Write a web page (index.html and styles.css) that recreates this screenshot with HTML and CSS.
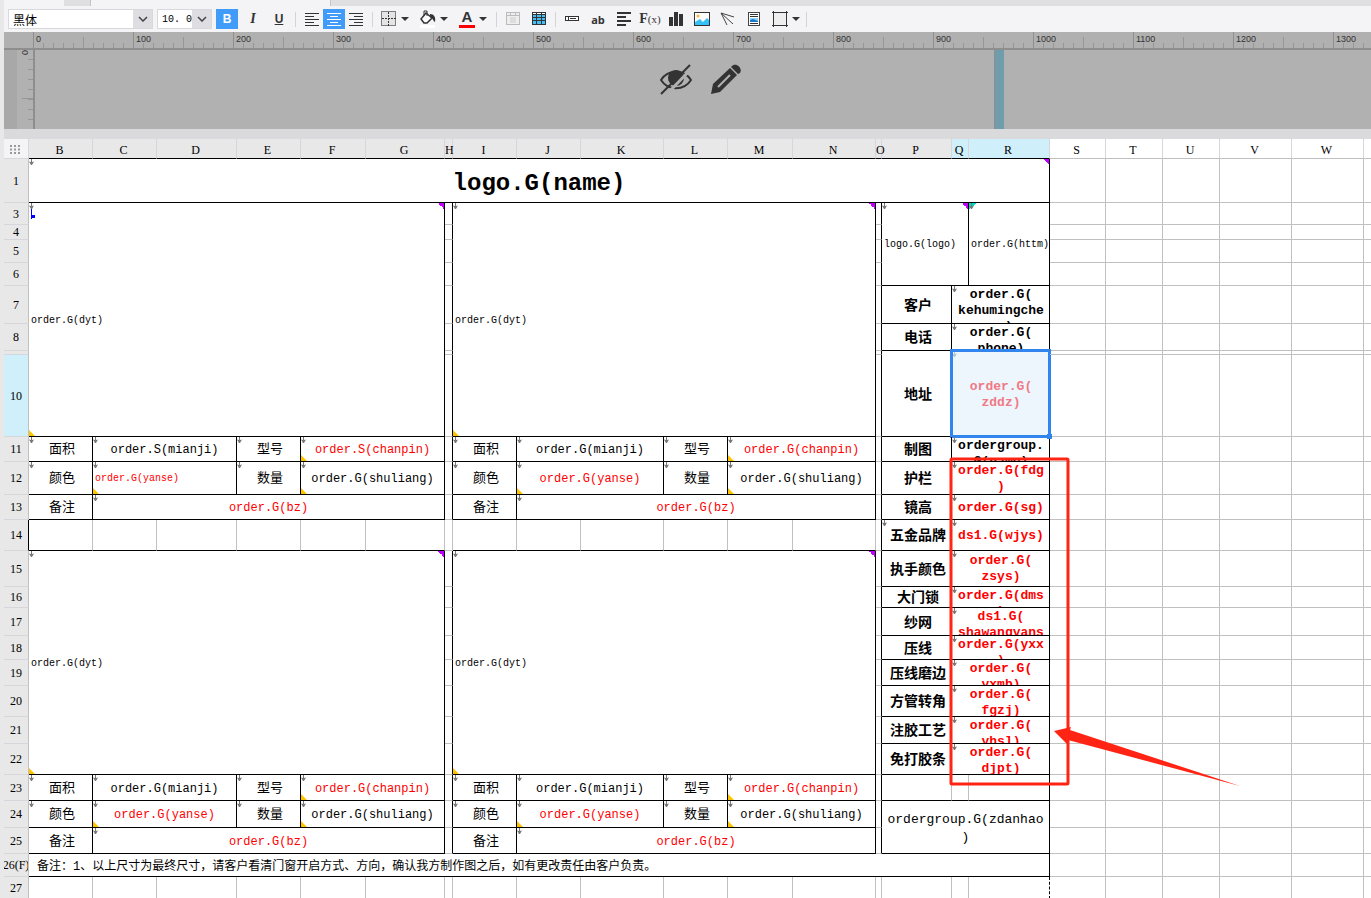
FILE: index.html
```html
<!DOCTYPE html>
<html lang="zh-CN">
<head>
    <meta charset="UTF-8">
    <meta name="viewport" content="width=device-width, initial-scale=1.0">
    <title>logo.G(name)</title>
    <link rel="stylesheet" href="styles.css">
</head>
<body>
    <div class="tabs"><span class="tab"></span><span class="tab-rest"></span></div>

    <div class="toolbar">
        <div class="pick font-name">
            <select aria-label="字体"><option>黑体</option></select>
            <svg width="10" height="6"><path d="M1 1l4 4 4-4" fill="none" stroke="#444" stroke-width="1.500"/></svg>
        </div>
        <div class="pick font-size">
            <select aria-label="字号"><option>10. 0</option></select>
            <svg width="10" height="6"><path d="M1 1l4 4 4-4" fill="none" stroke="#444" stroke-width="1.500"/></svg>
        </div>
        <button class="tool active bold" aria-label="加粗">B</button>
        <button class="tool italic" aria-label="斜体">I</button>
        <button class="tool underline" aria-label="下划线">U</button>
        <span class="sep"></span>
        <div class="group">
            <button class="tool" aria-label="左对齐"><svg width="16" height="14"><path d="M1 1.500h14M1 4.500h9M1 7.500h14M1 10.500h9M1 13.500h14" stroke="#333"/></svg></button>
            <button class="tool active" aria-label="居中"><svg width="16" height="14"><path d="M1 1.500h14M4 4.500h8M1 7.500h14M4 10.500h8M1 13.500h14" stroke="#fff"/></svg></button>
            <button class="tool" aria-label="右对齐"><svg width="16" height="14"><path d="M1 1.500h14M6 4.500h9M1 7.500h14M6 10.500h9M1 13.500h14" stroke="#333"/></svg></button>
        </div>
        <span class="sep"></span>
        <div class="group split">
            <button class="tool" aria-label="边框"><svg width="16" height="16"><rect x=".5" y=".5" width="14" height="14" fill="#e4e4e4" stroke="#111" stroke-dasharray="1 1"/><path d="M7.500 1v14M1 7.500h14" stroke="#333" stroke-dasharray="2 1"/></svg></button>
            <button class="drop" aria-label="边框选项"></button>
        </div>
        <div class="group split">
            <button class="tool" aria-label="填充"><svg width="18" height="18"><path d="M7 3l6 5-5 5H5L2 9z" fill="#fff" stroke="#333" stroke-width="1.500"/><path d="M5 6V1h3v5" fill="none" stroke="#333"/><path d="M11 4c4 0 6 3 5 8-2-1-2-4-5-5z" fill="#333"/><path d="M1 15h15v3H1z" fill="#fff"/></svg></button>
            <button class="drop" aria-label="填充选项"></button>
        </div>
        <div class="group split">
            <button class="tool color" aria-label="文字颜色">A</button>
            <button class="drop" aria-label="颜色选项"></button>
        </div>
        <span class="sep"></span>
        <button class="tool" aria-label="单元格"><svg width="16" height="16"><rect x="1.500" y="1.500" width="13" height="12" fill="#eee" stroke="#bbb"/><path d="M1 4.500h14M5.500 1v3M10.500 1v3" stroke="#bbb"/><rect x="5" y="6" width="6" height="6" fill="#ddd"/></svg></button>
        <button class="tool" aria-label="表格"><svg width="16" height="16"><path d="M1 1h14v13H1z" fill="#333"/><path d="M2 4h3v2H2zM6 4h4v2H6zM11 4h3v2h-3zM2 7h3v2H2zM6 7h4v2H6zM11 7h3v2h-3zM2 10h3v3H2zM6 10h4v3H6zM11 10h3v3h-3z" fill="#45bdf5"/><path d="M2 2h3v1H2zM6 2h4v1H6zM11 2h3v1h-3z" fill="#fff"/></svg></button>
        <span class="sep"></span>
        <button class="tool" aria-label="控件"><svg width="16" height="8"><rect x="1.500" y="1.500" width="13" height="4" fill="#fff" stroke="#333"/><path d="M4.500 2v3M6 3.500h6" stroke="#333"/></svg></button>
        <button class="tool text" aria-label="文本">ab</button>
        <button class="tool" aria-label="段落"><svg width="16" height="16"><path d="M1 2h14M1 6h9M1 10h14M1 14h9" stroke="#333" stroke-width="2"/></svg></button>
        <button class="tool formula" aria-label="公式">F<small>(x)</small></button>
        <button class="tool" aria-label="图表"><svg width="16" height="16"><path d="M1 6h4v9H1zM6 1h4v14H6zM11 3h4v12h-4z" fill="#333"/></svg></button>
        <button class="tool" aria-label="图片"><svg width="16" height="16"><rect x=".5" y="1.500" width="15" height="13" fill="#fff" stroke="#333"/><path d="M1 11l5-3 3 3 4-4 2 2v5H1z" fill="#35c1f7"/><circle cx="4" cy="5" r="1.500" fill="#f8b43a"/></svg></button>
        <button class="tool" aria-label="斜线"><svg width="16" height="16"><path d="M1 2l13 4M1 2l12 11M1 2l6 12" fill="none" stroke="#444"/></svg></button>
        <button class="tool" aria-label="子报表"><svg width="16" height="16"><rect x="2.500" y="1.500" width="11" height="13" fill="#fff" stroke="#444"/><path d="M4 3.500h8M4 5.500h8M4 12.500h8" stroke="#333"/><path d="M4 7h8v4H4z" fill="#8fd0f5"/><path d="M4 11V9l3-1 5 2v1z" fill="#1d78cc"/></svg></button>
        <div class="group split">
            <button class="tool" aria-label="形状"><svg width="18" height="18"><rect x="2.500" y="2.500" width="12" height="12" fill="#eee"/><path d="M2.500 1v16M15.500 1v16M1 2.500h16M1 15.500h16" stroke="#333"/></svg></button>
            <button class="drop" aria-label="形状选项"></button>
        </div>
        <span class="sep"></span>
    </div>

    <div class="ruler">
        <span>0</span><span>100</span><span>200</span><span>300</span><span>400</span><span>500</span><span>600</span><span>700</span><span>800</span><span>900</span><span>1000</span><span>1100</span><span>1200</span><span>1300</span>
    </div>
    <div class="stage">
        <div class="v-ruler">0</div>
        <div class="canvas">
            <svg width="34" height="34" viewBox="0 0 34 34"><path d="M2 17C9 6 25 6 32 17C25 28 9 28 2 17z" fill="none" stroke="#333" stroke-width="2"/><circle cx="17" cy="15" r="8" fill="#333"/><path d="M34 4L5 34" stroke="#b0b0b0" stroke-width="3"/><path d="M31 2L2 31" stroke="#333" stroke-width="2"/></svg>
            <svg width="32" height="32" viewBox="0 0 32 32"><path d="M1 31l2-10L20 5l7 7-17 17z" fill="#333"/><path d="M22 3c4-4 11 2 8 7l-2 1-7-7z" fill="#333"/><path d="M8 24L20 12" stroke="#b0b0b0" stroke-width="2"/></svg>
        </div>
        <div class="guide"></div>
    </div>

    <main class="sheet">
        <table>
            <colgroup>
                <col class="w25"><col class="w64"><col class="w64"><col class="w80"><col class="w64"><col class="w65"><col class="w79"><col class="w8"><col class="w64"><col class="w64"><col class="w83"><col class="w64"><col class="w65"><col class="w83"><col class="w6"><col class="w70"><col class="w17"><col class="w81"><col class="w56"><col class="w57"><col class="w57"><col class="w72"><col class="w72"><col>
            </colgroup>
            <tr class="head">
                <th class="corner"><svg width="11" height="9"><path d="M0 1h11M0 4.500h11M0 8h11" stroke="#999" stroke-width="2" stroke-dasharray="2 2"/></svg></th>
                <th>B</th><th>C</th><th>D</th><th>E</th><th>F</th><th>G</th><th>H</th><th>I</th><th>J</th><th>K</th><th>L</th><th>M</th><th>N</th><th>O</th><th>P</th><th class="on">Q</th><th class="on">R</th>
                <th class="out">S</th><th class="out">T</th><th class="out">U</th><th class="out">V</th><th class="out">W</th><th class="out"></th>
            </tr>
            <tr class="r1">
                <th>1</th><td class="kr kb arrow purple title" colspan="17">logo.G(name)</td>
                <td></td><td></td><td></td><td></td><td></td><td></td>
            </tr>
            <tr class="r3">
                <th>3</th><td class="kr kb arrow purple yellow small start" colspan="6" rowspan="8">order.G(dyt)</td><td class="kr"></td>
                <td class="kr kb arrow purple yellow small" colspan="6" rowspan="8">order.G(dyt)</td><td class="kr"></td>
                <td class="kr kb arrow purple small" colspan="2" rowspan="4">logo.G(logo)</td><td class="kr kb arrow teal small" rowspan="4">order.G(httm)</td>
                <td></td><td></td><td></td><td></td><td></td><td></td>
            </tr>
            <tr class="r4"><th>4</th><td class="kr"></td><td class="kr"></td><td></td><td></td><td></td><td></td><td></td><td></td></tr>
            <tr class="r5"><th>5</th><td class="kr"></td><td class="kr"></td><td></td><td></td><td></td><td></td><td></td><td></td></tr>
            <tr class="r6"><th>6</th><td class="kr"></td><td class="kr"></td><td></td><td></td><td></td><td></td><td></td><td></td></tr>
            <tr class="r7">
                <th>7</th><td class="kr"></td><td class="kr"></td>
                <td class="kr kb name">客户</td><td class="kr kb arrow value" colspan="2"><div class="clip">order.G(<br>kehumingche<br>ng)</div></td>
                <td></td><td></td><td></td><td></td><td></td><td></td>
            </tr>
            <tr class="r8">
                <th>8</th><td class="kr"></td><td class="kr"></td>
                <td class="kr kb name">电话</td><td class="kr kb arrow value" colspan="2"><div class="clip">order.G(<br>phone)</div></td>
                <td></td><td></td><td></td><td></td><td></td><td></td>
            </tr>
            <tr class="r9">
                <th></th><td class="kr"></td><td class="kr"></td>
                <td class="kr kb name" rowspan="2">地址</td><td class="kr kb arrow value selected" colspan="2" rowspan="2">order.G(<br>zddz)</td>
                <td></td><td></td><td></td><td></td><td></td><td></td>
            </tr>
            <tr class="r10"><th class="on">10</th><td class="kr"></td><td class="kr"></td><td></td><td></td><td></td><td></td><td></td><td></td></tr>
            <tr class="r11">
                <th>11</th><td class="kr kb arrow label">面积</td><td class="kr kb arrow" colspan="2">order.S(mianji)</td><td class="kr kb arrow label">型号</td><td class="kr kb arrow yellow red" colspan="2">order.S(chanpin)</td><td class="kr"></td>
                <td class="kr kb arrow label">面积</td><td class="kr kb arrow" colspan="2">order.G(mianji)</td><td class="kr kb arrow label">型号</td><td class="kr kb arrow yellow red" colspan="2">order.G(chanpin)</td><td class="kr"></td>
                <td class="kr kb name">制图</td><td class="kr kb arrow value" colspan="2"><div class="clip">ordergroup.<br>G(name)</div></td>
                <td></td><td></td><td></td><td></td><td></td><td></td>
            </tr>
            <tr class="r12">
                <th>12</th><td class="kr kb arrow label">颜色</td><td class="kr kb arrow yellow red small" colspan="2">order.G(yanse)</td><td class="kr kb arrow label">数量</td><td class="kr kb arrow yellow" colspan="2">order.G(shuliang)</td><td class="kr"></td>
                <td class="kr kb arrow label">颜色</td><td class="kr kb arrow yellow red" colspan="2">order.G(yanse)</td><td class="kr kb arrow label">数量</td><td class="kr kb arrow yellow" colspan="2">order.G(shuliang)</td><td class="kr"></td>
                <td class="kr kb name">护栏</td><td class="kr kb arrow value red" colspan="2"><div class="clip">order.G(fdg<br>)</div></td>
                <td></td><td></td><td></td><td></td><td></td><td></td>
            </tr>
            <tr class="r13">
                <th>13</th><td class="kr kb label">备注</td><td class="kr kb arrow red" colspan="5">order.G(bz)</td><td class="kr"></td>
                <td class="kr kb label">备注</td><td class="kr kb arrow red" colspan="5">order.G(bz)</td><td class="kr"></td>
                <td class="kr kb name">镜高</td><td class="kr kb arrow value red" colspan="2"><div class="clip">order.G(sg)</div></td>
                <td></td><td></td><td></td><td></td><td></td><td></td>
            </tr>
            <tr class="r14">
                <th class="kr">14</th><td class="kb"></td><td class="kb"></td><td class="kb"></td><td class="kb"></td><td class="kb"></td><td class="kb"></td><td></td>
                <td class="kb"></td><td class="kb"></td><td class="kb"></td><td class="kb"></td><td class="kb"></td><td class="kb"></td><td class="kr"></td>
                <td class="kr kb arrow name">五金品牌</td><td class="kr kb arrow value red" colspan="2"><div class="clip">ds1.G(wjys)</div></td>
                <td></td><td></td><td></td><td></td><td></td><td></td>
            </tr>
            <tr class="r15">
                <th>15</th><td class="kr kb arrow purple yellow small" colspan="6" rowspan="8">order.G(dyt)</td><td class="kr"></td>
                <td class="kr kb arrow purple yellow small" colspan="6" rowspan="8">order.G(dyt)</td><td class="kr"></td>
                <td class="kr kb name">执手颜色</td><td class="kr kb arrow value red" colspan="2"><div class="clip">order.G(<br>zsys)</div></td>
                <td></td><td></td><td></td><td></td><td></td><td></td>
            </tr>
            <tr class="r16">
                <th>16</th><td class="kr"></td><td class="kr"></td>
                <td class="kr kb name">大门锁</td><td class="kr kb arrow value red" colspan="2"><div class="clip">order.G(dms<br>)</div></td>
                <td></td><td></td><td></td><td></td><td></td><td></td>
            </tr>
            <tr class="r17">
                <th>17</th><td class="kr"></td><td class="kr"></td>
                <td class="kr kb name">纱网</td><td class="kr kb arrow value red" colspan="2"><div class="clip">ds1.G(<br>shawangyans<br>e)</div></td>
                <td></td><td></td><td></td><td></td><td></td><td></td>
            </tr>
            <tr class="r18">
                <th>18</th><td class="kr"></td><td class="kr"></td>
                <td class="kr kb name">压线</td><td class="kr kb arrow value red" colspan="2"><div class="clip">order.G(yxx<br>)</div></td>
                <td></td><td></td><td></td><td></td><td></td><td></td>
            </tr>
            <tr class="r19">
                <th>19</th><td class="kr"></td><td class="kr"></td>
                <td class="kr kb name">压线磨边</td><td class="kr kb arrow value red" colspan="2"><div class="clip">order.G(<br>yxmb)</div></td>
                <td></td><td></td><td></td><td></td><td></td><td></td>
            </tr>
            <tr class="r20">
                <th>20</th><td class="kr"></td><td class="kr"></td>
                <td class="kr kb name">方管转角</td><td class="kr kb arrow value red" colspan="2"><div class="clip">order.G(<br>fgzj)</div></td>
                <td></td><td></td><td></td><td></td><td></td><td></td>
            </tr>
            <tr class="r21">
                <th>21</th><td class="kr"></td><td class="kr"></td>
                <td class="kr kb name">注胶工艺</td><td class="kr kb arrow value red" colspan="2"><div class="clip">order.G(<br>yhsl)</div></td>
                <td></td><td></td><td></td><td></td><td></td><td></td>
            </tr>
            <tr class="r22">
                <th>22</th><td class="kr"></td><td class="kr"></td>
                <td class="kr kb name">免打胶条</td><td class="kr kb arrow value red" colspan="2"><div class="clip">order.G(<br>djpt)</div></td>
                <td></td><td></td><td></td><td></td><td></td><td></td>
            </tr>
            <tr class="r23">
                <th>23</th><td class="kr kb arrow label">面积</td><td class="kr kb arrow" colspan="2">order.G(mianji)</td><td class="kr kb arrow label">型号</td><td class="kr kb arrow yellow red" colspan="2">order.G(chanpin)</td><td class="kr"></td>
                <td class="kr kb arrow label">面积</td><td class="kr kb arrow" colspan="2">order.G(mianji)</td><td class="kr kb arrow label">型号</td><td class="kr kb arrow yellow red" colspan="2">order.G(chanpin)</td><td class="kr"></td>
                <td class="kb"></td><td class="kb"></td><td class="kr kb"></td>
                <td></td><td></td><td></td><td></td><td></td><td></td>
            </tr>
            <tr class="r24">
                <th>24</th><td class="kr kb arrow label">颜色</td><td class="kr kb arrow yellow red" colspan="2">order.G(yanse)</td><td class="kr kb arrow label">数量</td><td class="kr kb arrow yellow" colspan="2">order.G(shuliang)</td><td class="kr"></td>
                <td class="kr kb arrow label">颜色</td><td class="kr kb arrow yellow red" colspan="2">order.G(yanse)</td><td class="kr kb arrow label">数量</td><td class="kr kb arrow yellow" colspan="2">order.G(shuliang)</td><td class="kr"></td>
                <td class="kr kb number" colspan="3" rowspan="2">ordergroup.G(zdanhao<br>)</td>
                <td></td><td></td><td></td><td></td><td></td><td></td>
            </tr>
            <tr class="r25">
                <th>25</th><td class="kr kb label">备注</td><td class="kr kb arrow red" colspan="5">order.G(bz)</td><td class="kr"></td>
                <td class="kr kb label">备注</td><td class="kr kb arrow red" colspan="5">order.G(bz)</td><td class="kr"></td>
                <td></td><td></td><td></td><td></td><td></td><td></td>
            </tr>
            <tr class="r26">
                <th><div class="footer-row">26(F)</div></th><td class="kr kb note" colspan="17">备注：1、以上尺寸为最终尺寸，请客户看清门窗开启方式、方向，确认我方制作图之后，如有更改责任由客户负责。</td>
                <td></td><td></td><td></td><td></td><td></td><td></td>
            </tr>
            <tr class="r27">
                <th>27</th><td></td><td></td><td></td><td></td><td></td><td></td><td></td><td></td><td></td><td></td><td></td><td></td><td></td><td></td><td></td><td></td><td class="dash"></td>
                <td></td><td></td><td></td><td></td><td></td><td></td>
            </tr>
        </table>

        <svg class="marks" width="1300" height="700">
            <path d="M1043 295h5v5h-5z" fill="#3385ee"/>
            <rect x="947" y="320" width="117" height="325" rx="1" fill="none" stroke="#ff2414" stroke-width="3"/>
            <path d="M1050 592l17-4-1 3 170 56-172-46 1 6z" fill="#ff2414"/>
        </svg>
    </main>
</body>
</html>
```
FILE: styles.css
```css
* {
    box-sizing: border-box;
}
body {
    margin: 0;
    padding-left: 4px;
    background: #e8e8e8;
    font-family: "Liberation Sans", "Noto Sans CJK SC", sans-serif;
    overflow: hidden;
}
.tabs {
    display: flex;
    height: 6px;
    background: #f4f4f7;
}
.tab {
    width: 27px;
    margin-left: 60px;
    background: #dfdfe2;
    border-right: 1px solid #c4c4c8;
}
.tab-rest {
    flex: 1;
    margin-left: 239px;
    background: #dfdfe2;
    border-left: 1px solid #c4c4c8;
}

/* toolbar */
.toolbar {
    display: flex;
    align-items: center;
    gap: 4px;
    height: 26px;
    padding-left: 4px;
    background: #f4f4f7;
}
.pick {
    display: grid;
    grid-template-columns: 1fr 19px;
    align-items: center;
    justify-items: center;
    height: 20px;
    border: 1px solid #d9d9dd;
    background: #dedee2;
}
.pick select {
    width: 100%;
    height: 18px;
    padding: 0 4px;
    border: none;
    appearance: none;
    color: #000;
    background: #fff;
}
.font-name {
    width: 145px;
}
.font-name select {
    font-family: "Noto Sans CJK SC", sans-serif;
    font-size: 12px;
}
.font-size {
    width: 55px;
}
.font-size select {
    padding: 0 0 0 4px;
    font-family: "Liberation Mono", monospace;
    font-size: 10px;
}
button {
    padding: 0;
    border: none;
    background: none;
    color: #333;
    font-family: inherit;
}
.tool {
    display: flex;
    align-items: center;
    justify-content: center;
    width: 22px;
    height: 20px;
    font-size: 12px;
}
.active {
    background: #409cf8;
    color: #fff;
}
.bold {
    font-weight: bold;
    font-size: 12px;
}
.italic {
    font-family: "Liberation Serif", serif;
    font-style: italic;
    font-weight: bold;
    font-size: 14px;
}
.underline {
    text-decoration: underline;
    font-weight: bold;
    font-size: 12px;
}
.color {
    width: 22px;
    height: 18px;
    font-weight: bold;
    font-size: 15px;
    line-height: 14px;
    background: linear-gradient(red, red) bottom / 16px 3px no-repeat;
    align-items: flex-start;
}
.text {
    font-family: "Open Sans", sans-serif;
    font-weight: bold;
    font-size: 11px;
}
.formula {
    font-family: "Liberation Serif", serif;
    font-weight: bold;
    font-size: 14px;
}
.formula small {
    font-size: 11px;
    font-weight: normal;
}
.sep {
    width: 1px;
    height: 15px;
    margin: 0 1px;
    background: #d4d4d8;
}
.group {
    display: flex;
    align-items: center;
}
.split {
    margin-right: 3px;
}
.split:last-of-type {
    margin-right: 0;
}
.drop {
    width: 10px;
    height: 20px;
    background: #333;
    clip-path: polygon(10% 40%, 90% 40%, 50% 60%);
}

/* rulers and preview band */
.ruler {
    display: flex;
    height: 18px;
    padding-left: 29px;
    overflow: hidden;
    border-bottom: 2px solid #8e8e8e;
    background:
        repeating-linear-gradient(to right, #8e8e8e 0 1px, transparent 1px 100px) 29px 0 no-repeat,
        repeating-linear-gradient(to right, #969696 0 1px, transparent 1px 50px) 29px 5px no-repeat,
        repeating-linear-gradient(to right, #969696 0 1px, transparent 1px 10px) 29px 11px no-repeat,
        #b0b0b0;
}
.ruler span {
    flex: 0 0 100px;
    padding: 2px 0 0 3px;
    color: #333;
    font-size: 9px;
    line-height: 10px;
}
.stage {
    display: flex;
    height: 79px;
    background: #b1b1b1;
}
.v-ruler {
    width: 31px;
    border-left: 13px solid #a8a8a8;
    border-right: 2px solid #8e8e8e;
    writing-mode: vertical-rl;
    color: #333;
    font-size: 9px;
    line-height: 16px;
    background:
        repeating-linear-gradient(to bottom, transparent 0 9px, #969696 9px 10px) right 0 / 5px 100% no-repeat,
        linear-gradient(#969696, #969696) right 48px / 11px 1px no-repeat;
}
.canvas {
    display: flex;
    gap: 17px;
    width: 960px;
    padding: 13px 0 0 624px;
    border-right: 1px solid #8e8e8e;
}
.guide {
    width: 9px;
    background: #6f9dab;
}

/* report grid */
.sheet {
    position: relative;
    border-top: 10px solid #dadadc;
}
table {
    width: 100%;
    table-layout: fixed;
    border-collapse: separate;
    border-spacing: 0;
    background: #fff;
}
tr {
    height: var(--h);
}
th {
    padding: 0;
    border-right: 1px solid #c0c0c0;
    border-bottom: 1px solid #d6d6dc;
    background: #e8e8e8;
    font-family: "Liberation Serif", serif;
    font-weight: normal;
    font-size: 12px;
    line-height: 14px;
}
.head th {
    padding: 2px 2px 0 0;
    border-right-color: #d6d6dc;
    border-bottom-color: #000;
}
.head .corner {
    background: #f4f4f7;
    border-bottom-color: #d6d6dc;
}
.corner svg {
    display: block;
    margin: auto;
}
.head .out {
    background: #fff;
    border-bottom-color: #c0c0c0;
}
th.on {
    background: #cfeffb;
}
td {
    position: relative;
    padding: 2px 0 0;
    border-right: 1px solid #c0c0c0;
    border-bottom: 1px solid #c0c0c0;
    font-family: "Liberation Mono", "Noto Sans CJK SC", monospace;
    font-size: 12px;
    line-height: 16px;
    text-align: center;
    white-space: nowrap;
}
td:empty {
    padding: 0;
}
tr > :last-child {
    border-right: none;
}
.kr {
    border-right-color: #000;
}
.kb {
    border-bottom-color: #000;
}
.dash {
    border-right: 1px dashed #000;
}
.title {
    font-size: 24px;
    line-height: 32px;
    font-weight: bold;
    padding-top: 6px;
}
.small {
    padding-left: 2px;
    font-size: 10px;
    text-align: left;
}
.label {
    padding-left: 3px;
    font-size: 13px;
}
.name {
    padding-left: 3px;
    font-size: 14px;
    font-weight: bold;
}
.value {
    padding: 0 0 0 1px;
    font-size: 13px;
    font-weight: bold;
}
.number {
    padding-top: 4px;
    font-size: 13px;
    line-height: 18px;
}
.note {
    padding-top: 4px;
    padding-left: 8px;
    text-align: left;
}
.red {
    color: #f00;
}
.clip {
    display: flex;
    flex-direction: column;
    justify-content: safe center;
    height: calc(var(--h) - 1px);
    padding-top: 1px;
    overflow: hidden;
}
.footer-row {
    display: flex;
    justify-content: center;
    overflow: hidden;
}

/* expand direction marker and corner flags */
.arrow::before {
    content: "";
    position: absolute;
    top: 0;
    left: 0;
    width: 5px;
    height: 6px;
    background: #777;
    clip-path: polygon(40% 0, 60% 0, 60% 50%, 100% 40%, 60% 100%, 40% 100%, 0 40%, 40% 50%);
}
.yellow::after {
    content: "";
    position: absolute;
    bottom: 0;
    left: 0;
    width: 6px;
    height: 6px;
    background: #ffc400;
    clip-path: polygon(0 0, 100% 100%, 0 100%);
}
.purple {
    background: linear-gradient(to bottom left, #c000ff 50%, transparent 50%) top right / 6px 6px no-repeat;
}
.teal {
    background: linear-gradient(to bottom right, #00e0c0 50%, transparent 50%) top left / 8px 6px no-repeat;
}
.start {
    background:
        linear-gradient(#00f, #00f) 2px 5px / 1px 11px no-repeat,
        linear-gradient(#00f, #00f) 2px 12px / 4px 3px no-repeat,
        linear-gradient(to bottom left, #c000ff 50%, transparent 50%) top right / 6px 6px no-repeat;
}
.selected {
    padding-top: 2px;
    color: #f07a85;
    background: #edf5fd;
}
.selected::before {
    opacity: .4;
}
.selected::after {
    content: "";
    position: absolute;
    inset: -2px;
    border: 3px solid #3385ee;
}
.marks {
    position: absolute;
    top: 0;
    left: 0;
}

/* column widths */
.w6 { width: 6px; }
.w8 { width: 8px; }
.w17 { width: 17px; }
.w25 { width: 25px; }
.w56 { width: 56px; }
.w57 { width: 57px; }
.w64 { width: 64px; }
.w65 { width: 65px; }
.w70 { width: 70px; }
.w72 { width: 72px; }
.w79 { width: 79px; }
.w80 { width: 80px; }
.w81 { width: 81px; }
.w83 { width: 83px; }

/* row heights */
.head { --h: 20px; }
.r1 { --h: 44px; }
.r3 { --h: 22px; }
.r4 { --h: 15px; }
.r5 { --h: 23px; }
.r6 { --h: 23px; }
.r7 { --h: 38px; }
.r8 { --h: 27px; }
.r9 { --h: 4px; }
.r10 { --h: 82px; }
.r11 { --h: 25px; }
.r12 { --h: 33px; }
.r13 { --h: 25px; }
.r14 { --h: 31px; }
.r15 { --h: 36px; }
.r16 { --h: 21px; }
.r17 { --h: 28px; }
.r18 { --h: 24px; }
.r19 { --h: 26px; }
.r20 { --h: 31px; }
.r21 { --h: 27px; }
.r22 { --h: 31px; }
.r23 { --h: 26px; }
.r24 { --h: 27px; }
.r25 { --h: 26px; }
.r26 { --h: 23px; }
.r27 { --h: 22px; }
```
